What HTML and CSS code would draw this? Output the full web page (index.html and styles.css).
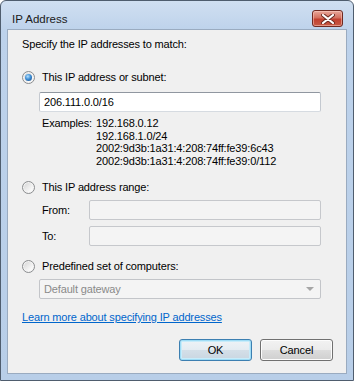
FILE: index.html
```html
<!DOCTYPE html>
<html lang="en">
<head>
    <meta charset="UTF-8">
    <title>IP Address</title>
    <link rel="stylesheet" href="styles.css">
</head>
<body>
    <div class="window">
        <div class="titlebar">
            <span class="title">IP Address</span>
            <span class="close-btn">
                <svg width="14" height="10" viewBox="0 0 14 10">
                    <path d="M2 1 L12 9 M12 1 L2 9" stroke="#6b2a22" stroke-width="4" stroke-linecap="round"/>
                    <path d="M2 1 L12 9 M12 1 L2 9" stroke="#ffffff" stroke-width="2.2" stroke-linecap="round"/>
                </svg>
            </span>
        </div>

        <div class="client">
            <p class="intro">Specify the IP addresses to match:</p>

            <!-- Subnet -->
            <div class="option">
                <span class="radio checked"></span>
                <span>This IP address or subnet:</span>
            </div>
            <input type="text" class="textbox subnet" value="206.111.0.0/16">
            <div class="examples">
                <span class="ex-label">Examples:</span>
                <div class="ex-list">
                    <div>192.168.0.12</div>
                    <div>192.168.1.0/24</div>
                    <div>2002:9d3b:1a31:4:208:74ff:fe39:6c43</div>
                    <div>2002:9d3b:1a31:4:208:74ff:fe39:0/112</div>
                </div>
            </div>

            <!-- Range -->
            <div class="option option-range">
                <span class="radio"></span>
                <span>This IP address range:</span>
            </div>
            <div class="range-row range-from">
                <span class="range-label">From:</span>
                <span class="textbox disabled"></span>
            </div>
            <div class="range-row range-to">
                <span class="range-label">To:</span>
                <span class="textbox disabled"></span>
            </div>

            <!-- Predefined -->
            <div class="option option-predef">
                <span class="radio"></span>
                <span>Predefined set of computers:</span>
            </div>
            <div class="dropdown">
                <span>Default gateway</span>
                <span class="arrow"></span>
            </div>

            <a class="learn" href="#">Learn more about specifying IP addresses</a>

            <div class="buttons">
                <button type="button" class="btn btn-default">OK</button>
                <button type="button" class="btn">Cancel</button>
            </div>
        </div>
    </div>
</body>
</html>
```

FILE: styles.css
```css
* {
    box-sizing: border-box;
}
body {
    margin: 0;
    font-family: "Liberation Sans", Arial, sans-serif;
    font-size: 11px;
    letter-spacing: -0.15px;
    color: #000;
}
.window {
    width: 354px;
    height: 381px;
    border: 1px solid #4f5d6e;
    border-radius: 6px 6px 0 0;
    background: linear-gradient(#d0dff1, #bdd2eb 30px, #b8cee8);
    display: flex;
    flex-direction: column;
}
.titlebar {
    height: 28px;
    display: flex;
    align-items: flex-start;
    justify-content: space-between;
    padding: 7px 10px 0 11px;
}
.title {
    margin-top: 4px;
    line-height: 14px;
    font-size: 11.5px;
    letter-spacing: 0;
    color: #1a1a1a;
}
.close-btn {
    width: 31px;
    height: 17px;
    margin-top: 2px;
    border: 1px solid #6f2a22;
    border-radius: 3px;
    background: linear-gradient(#e8a89b, #d4705f 45%, #c2402f 55%, #c65a45);
    box-shadow: inset 0 0 0 1px rgba(255, 210, 200, 0.5);
    display: flex;
    align-items: center;
    justify-content: center;
}
.client {
    flex: 1;
    margin: 0 6px 6px;
    border: 1px solid #9aabc0;
    background: #f0f0f0;
    padding: 6px 0 0 14px;
}
.intro {
    margin: 0;
    line-height: 16px;
}
.option {
    display: flex;
    align-items: center;
    gap: 7px;
    height: 16px;
    margin-top: 17px;
}
.option-range,
.option-predef {
    margin-top: 12px;
}
.radio {
    width: 13px;
    height: 13px;
    border-radius: 50%;
    border: 1px solid #8b8d8f;
    background: linear-gradient(135deg, #d2d2d2, #f7f7f7 70%, #ffffff);
    box-shadow: inset 0 0 0 1px #f4f4f4;
    display: flex;
    align-items: center;
    justify-content: center;
}
.radio.checked::after {
    content: "";
    width: 7px;
    height: 7px;
    border-radius: 50%;
    background: radial-gradient(circle at 40% 35%, #b4e1ff, #3f8fd6 45%, #15457f);
}
.textbox {
    display: block;
    height: 20px;
    border: 1px solid #abadb3;
    border-color: #9097a0 #c4c9d0 #d6dbe1 #c4c9d0;
    border-radius: 2px;
    background: #fff;
    font-family: inherit;
    font-size: 11px;
    letter-spacing: -0.15px;
    padding: 0 4px;
    color: #000;
}
.subnet {
    width: 282px;
    margin: 7px 0 0 17px;
    outline: none;
}
.examples {
    display: flex;
    margin: 5px 0 0 20px;
    line-height: 12.5px;
}
.ex-label {
    width: 54px;
}
.range-row {
    display: flex;
    align-items: center;
    margin: 5px 0 0 20px;
    height: 20px;
}
.range-to {
    margin-top: 6px;
}
.range-label {
    width: 47px;
}
.textbox.disabled {
    width: 232px;
    background: #f4f4f4;
    border-color: #c6c8cc;
}
.dropdown {
    width: 282px;
    height: 20px;
    margin: 5px 0 0 17px;
    border: 1px solid #c3c5c9;
    border-radius: 2px;
    background: #f4f4f4;
    color: #8a8a8a;
    display: flex;
    align-items: center;
    justify-content: space-between;
    padding: 0 6px 0 4px;
}
.arrow {
    width: 0;
    height: 0;
    border-left: 4px solid transparent;
    border-right: 4px solid transparent;
    border-top: 4px solid #a6a6a6;
}
.learn {
    display: block;
    margin-top: 10px;
    line-height: 16px;
    width: max-content;
    color: #0066cc;
    text-decoration: underline;
}
.buttons {
    display: flex;
    justify-content: flex-end;
    gap: 8px;
    margin: 14px 13px 0 0;
}
.btn {
    width: 73px;
    height: 22px;
    font-family: inherit;
    font-size: 11px;
    letter-spacing: -0.15px;
    color: #000;
    border: 1px solid #707070;
    border-radius: 3px;
    background: linear-gradient(#f2f2f2, #ebebeb 49%, #dddddd 51%, #cfcfcf);
    box-shadow: inset 0 0 0 1px #fcfcfc;
    padding: 0;
}
.btn-default {
    border-color: #3c7fb1;
    background: linear-gradient(#eef3f7, #e4ecf2 49%, #d4dfe8 51%, #c9d6e1);
    box-shadow: inset 0 0 0 1px #9fdcf5, inset 0 0 0 2px #c8ecfa;
}
```
